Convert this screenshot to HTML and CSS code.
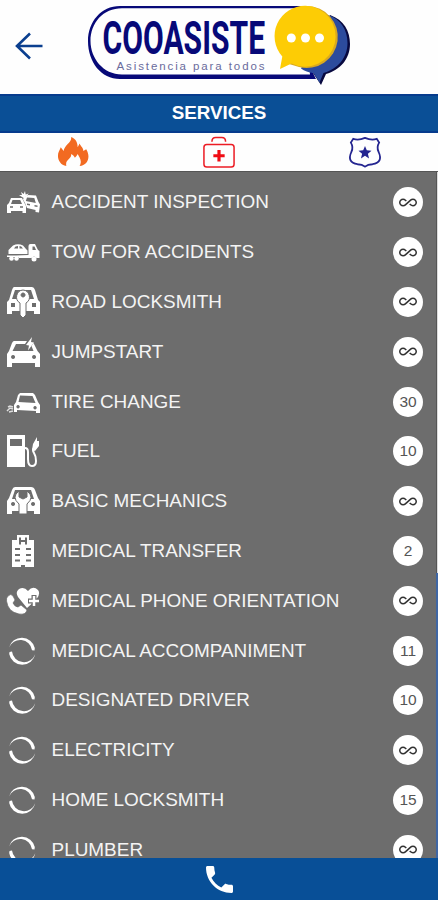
FILE: index.html
```html
<!DOCTYPE html>
<html lang="en">
<head>
    <meta charset="UTF-8">
    <meta name="viewport" content="width=device-width, initial-scale=1.0">
    <title>Cooasiste - Services</title>
    <link rel="stylesheet" href="styles.css">
</head>
<body>
    <!-- icon set -->
    <svg class="sprite" aria-hidden="true">
        <symbol id="crash" viewBox="0 0 34 34">
            <path fill-rule="evenodd" d="M5 13h11l3 6 1 2v7h-3.500v-2H5v2H1v-8l2-2zM6.500 15L5 19h11l-1.800-4zM4 21.200v1.500h3v-1.500zM14 21.200v1.500h3v-1.500z"/>
            <path fill-rule="evenodd" d="M18 12l4-2 8 .5 2.500 6.500 1.500 2.500-1 8-3.500-.5v-2L21 23l-2-5-2-3.500zM21 12.500l-1.200 3.500 10 2-1.500-5zM21 18.500V20l3 .6v-1.500zM28.500 20v1.500l3 .6v-1.500z"/>
            <path d="M16 12l-3-2 3 0-1-3 2.700 2L19 6l.7 3.500 3-1-2 2.500-3 2z"/>
        </symbol>
        <symbol id="tow" viewBox="0 0 34 34">
            <path fill-rule="evenodd" d="M2.500 19v-4L7 10.500Q12 8 17 10.500l3 3.500 1.500 1.500V19zM8 13.500h4V11l-2.500.5zM13.500 11v2.500H17l-1.800-2z"/>
            <path fill-rule="evenodd" d="M1 20.500h9L22.500 20V11q0-2 2-2H29l3 6 1.500 1v7h-3q-2.500-3-5 0H13l-1-1H1zM26.500 11.500V15h3.500l-1.500-3.500z"/>
            <circle cx="5.500" cy="23.500" r="2.300"/><circle cx="10.500" cy="23.500" r="2.300"/><circle cx="28" cy="24" r="2.500"/>
        </symbol>
        <symbol id="carkey" viewBox="0 0 34 34">
            <path fill-rule="evenodd" d="M8 2h18q2 0 3 3l3 10 2 2v12h-6v-3H6v3H1V17l2-2L6 5q1-3 2-3zM9 5L6 14h22L25 5zM5 18v4h4v-4zM26 18v4h4v-4z"/>
            <path fill-rule="evenodd" stroke="#6d6d6d" d="M17 5a7 7 0 0 1 3 13v12l-3 3-3-3V18a7 7 0 0 1 3-13zM17 8a2 2 0 1 0 .1 0z"/>
        </symbol>
        <symbol id="carbolt" viewBox="0 0 34 34">
            <path fill-rule="evenodd" d="M8 6h13l-2 3H10L6.500 16h21l-2-5 2-3 4 8 2.500 3v13h-5v-4H6v4H1V19l2-3 3-8q1-2 2-2zM7 20a2 2 0 1 0 .1 0zM28 20a2 2 0 1 0 .1 0z"/>
            <path d="M26 2l-6 8 3 .5-1 5 6-8-3-.5z"/>
        </symbol>
        <symbol id="cartire" viewBox="0 0 34 34">
            <path fill-rule="evenodd" d="M14 8h13l2 2 3 7 2 3v8h-4v-2L11 25v2H8v-7l2-3 2-7zM14 10.500L12.500 17l17 1L26.500 11zM12 20a1.700 1.700 0 1 0 .1 0zM29 21a1.700 1.700 0 1 0 .1 0z"/>
            <path fill="none" stroke="#ddd" stroke-width="1.500" d="M2 22l2-1 3 1M1 26l3-3 3 1M3 27l4-1"/>
        </symbol>
        <symbol id="pump" viewBox="0 0 34 34">
            <path fill-rule="evenodd" d="M1 1h18v32H1zM4 5v7h12V5z"/>
            <path fill="none" stroke="#fff" stroke-width="2" d="M19 14q3 0 3 4v7q0 7 4 7t4-5-2-8 0-5"/>
            <path d="M31 3v4h2v5l-4 5-3-1 1-6z"/>
        </symbol>
        <symbol id="carwrench" viewBox="0 0 34 34">
            <path fill-rule="evenodd" d="M9 3h16q3 0 4 3l3 8 2 3v13h-6v-3H6v3H1V17l2-3 3-8q1-3 3-3zM9 6L6 15h22L25 6zM7 18a2 2 0 1 0 .1 0zM27 18a2 2 0 1 0 .1 0z"/>
            <path stroke="#6d6d6d" d="M13 7v6l4 2 4-2V7q8 6 0 13v10h-8V20q-8-7 0-13z"/>
        </symbol>
        <symbol id="hospital" viewBox="0 0 34 34">
            <path d="M11 1h12v5h5v27h-9v-2h-4v2H6V6h5z"/>
            <path fill="none" stroke="#6d6d6d" stroke-width="2" d="M14 3.500v7M20 3.500v7M14 7h6M9 15h5M20 15h5M9 21h5M20 21h5M9 26.500h5M20 26.500h5"/>
        </symbol>
        <symbol id="heartphone" viewBox="0 0 34 34">
            <path d="M22 7q-4-5-9-2-4 3-1 8l9 11 9-8q5-6 2-10-5-5-10 1z"/>
            <path fill="none" stroke="#6d6d6d" stroke-width="5" d="M28 11v12M22 17h12"/>
            <path fill="none" stroke="#fff" stroke-width="2.500" d="M28 12v10M23 17h10"/>
            <path stroke="#6d6d6d" stroke-width=".7" d="M2 12q3-3 5 0l2 4-2 3q2 4 5 4l3-2 6 5q-1 5-8 4Q2 28 .500 17q-.5-3 1.500-5z"/>
        </symbol>
        <symbol id="loading" viewBox="0 0 34 34">
            <path d="M3 13.500A13.300 13.300 0 0 1 28.800 14l-.3 2.500-2.500-.3A12 12 0 0 0 3 13.500z"/>
            <path d="M29.300 20A13.300 13.300 0 0 1 3.200 20l.3-2 2.500-.5A12 12 0 0 0 29.300 20z"/>
        </symbol>
        <symbol id="infinite" viewBox="0 6 24 12">
            <path d="M18.600 6.620c-1.440 0-2.800.56-3.770 1.530L7.800 14.390c-.64.64-1.490.99-2.400.99-1.870 0-3.390-1.510-3.390-3.380S3.530 8.620 5.400 8.620c.91 0 1.760.35 2.440 1.030l1.130 1 1.510-1.340L9.220 8.200C8.200 7.180 6.840 6.620 5.400 6.620 2.420 6.620 0 9.040 0 12s2.420 5.380 5.400 5.380c1.440 0 2.800-.56 3.770-1.530l7.030-6.240c.64-.64 1.490-.99 2.400-.99 1.870 0 3.390 1.510 3.390 3.380s-1.520 3.380-3.390 3.380c-.9 0-1.760-.35-2.440-1.030l-1.140-1.010-1.510 1.340 1.270 1.120c1.020 1.010 2.370 1.570 3.820 1.570 2.980 0 5.400-2.410 5.400-5.380s-2.420-5.370-5.400-5.370z"/>
        </symbol>
    </svg>

    <div class="app">
        <header class="header">
            <svg class="back" viewBox="0 0 28 28">
                <path d="M27.500 14H2M15 1.500L2 14l13 12.500"/>
            </svg>
            <svg class="logo" viewBox="88 0 264 90">
                <path fill="#070978" fill-rule="evenodd" d="M304 6H120C101 6 88 22 88 41c0 21 13 38 32 38h196l-6-12zM304 8.300L310 74.500H122C103 74.500 90.500 58 90.500 41 90.500 23 103 8.300 122 8.300z"/>
                <path fill="#08093f" d="M330 15c14 5 20 16 20 29 0 15-10 26-24 30l-5 11-8-12z"/>
                <path fill="#2c4b9d" d="M328 15c13 4 19.500 15 19.500 28 0 15-10 26-24 30l-4 9.500-6-9.500c-5-.5-9-2-12.500-4.500z"/>
                <path fill="#d9a91f" d="M307 6a31 31 0 1 1-8 61l-10-3z"/>
                <path fill="#fdcc05" d="M305.500 5.700a30.500 30.500 0 1 1-14 57.800L280 69l2.300-12.500a30.500 30.500 0 0 1 23.200-50.800z"/>
                <g fill="#fff"><circle cx="291.300" cy="38" r="4.500"/><circle cx="305.500" cy="38" r="4.500"/><circle cx="319.500" cy="38" r="4.500"/></g>
                <text class="logo-name" transform="translate(102.500 53.500) scale(.64 1)" textLength="254">COOASISTE</text>
                <text class="logo-slogan" x="116.500" y="69.500" textLength="148">Asistencia para todos</text>
            </svg>
        </header>

        <h1 class="title">SERVICES</h1>

        <nav class="tabs">
            <svg class="tab" viewBox="0 0 34 34">
                <path fill="#f26a21" d="M10 32C4 31 1 26 1 21c0-4 2-6 3-9l3 4c1-7 9-9 8-15 5 2 7 6 7 11l2-4c1 3 4 4 4 8l3-2c5 8 2 17-7 18 3-6 0-9-2-13-1 2-2 3-3 4-1-2-2-3-4-4 1 6-7 6-5 13z"/>
            </svg>
            <svg class="tab" viewBox="0 0 34 34">
                <g fill="none" stroke="#ec1c24" stroke-width="1.600">
                    <rect x="1" y="9" width="32" height="24" rx="3"/>
                    <path d="M9.500 6q0-4.500 4-4.500h6.500q4 0 4 4.500"/>
                </g>
                <path fill="#f00c14" d="M15.300 15h3.400v4.300H23v3.400h-4.300V27h-3.400v-4.300H11v-3.400h4.300z"/>
            </svg>
            <svg class="tab" viewBox="0 0 34 34">
                <path fill="none" stroke="#242590" stroke-width="1.900" d="M4.500 3q5.500 2 12.500-1 7 3 12.500 1L32 7q-3 5-.5 10 5 11-6.500 13-5 0-8 2.500Q14 30 9 30-2.500 28 2.500 17 5 12 2 7z"/>
                <path fill="#242590" d="M17 10.500l1.900 4.700 5 .4-3.800 3.300 1.200 5-4.300-2.800-4.300 2.800 1.200-5-3.800-3.300 5-.4z"/>
            </svg>
        </nav>

        <main class="content">
            <ul class="services">
                <li class="service"><svg class="icon"><use href="#crash"/></svg><span class="name">ACCIDENT INSPECTION</span><span class="badge"><svg class="inf"><use href="#infinite"/></svg></span></li>
                <li class="service"><svg class="icon"><use href="#tow"/></svg><span class="name">TOW FOR ACCIDENTS</span><span class="badge"><svg class="inf"><use href="#infinite"/></svg></span></li>
                <li class="service"><svg class="icon"><use href="#carkey"/></svg><span class="name">ROAD LOCKSMITH</span><span class="badge"><svg class="inf"><use href="#infinite"/></svg></span></li>
                <li class="service"><svg class="icon"><use href="#carbolt"/></svg><span class="name">JUMPSTART</span><span class="badge"><svg class="inf"><use href="#infinite"/></svg></span></li>
                <li class="service"><svg class="icon"><use href="#cartire"/></svg><span class="name">TIRE CHANGE</span><span class="badge">30</span></li>
                <li class="service"><svg class="icon"><use href="#pump"/></svg><span class="name">FUEL</span><span class="badge">10</span></li>
                <li class="service"><svg class="icon"><use href="#carwrench"/></svg><span class="name">BASIC MECHANICS</span><span class="badge"><svg class="inf"><use href="#infinite"/></svg></span></li>
                <li class="service"><svg class="icon"><use href="#hospital"/></svg><span class="name">MEDICAL TRANSFER</span><span class="badge">2</span></li>
                <li class="service"><svg class="icon"><use href="#heartphone"/></svg><span class="name">MEDICAL PHONE ORIENTATION</span><span class="badge"><svg class="inf"><use href="#infinite"/></svg></span></li>
                <li class="service"><svg class="icon"><use href="#loading"/></svg><span class="name">MEDICAL ACCOMPANIMENT</span><span class="badge">11</span></li>
                <li class="service"><svg class="icon"><use href="#loading"/></svg><span class="name">DESIGNATED DRIVER</span><span class="badge">10</span></li>
                <li class="service"><svg class="icon"><use href="#loading"/></svg><span class="name">ELECTRICITY</span><span class="badge"><svg class="inf"><use href="#infinite"/></svg></span></li>
                <li class="service"><svg class="icon"><use href="#loading"/></svg><span class="name">HOME LOCKSMITH</span><span class="badge">15</span></li>
                <li class="service"><svg class="icon"><use href="#loading"/></svg><span class="name">PLUMBER</span><span class="badge"><svg class="inf"><use href="#infinite"/></svg></span></li>
            </ul>
            <div class="scroll"><div class="scroll-rest"></div></div>
        </main>

        <footer class="footer">
            <svg class="call" viewBox="3 3 18 18">
                <path d="M6.620 10.790c1.440 2.830 3.760 5.140 6.590 6.590l2.200-2.200c.27-.27.67-.36 1.020-.24 1.120.37 2.330.57 3.570.57.55 0 1 .45 1 1V20c0 .55-.45 1-1 1-9.390 0-17-7.610-17-17 0-.55.45-1 1-1h3.500c.55 0 1 .45 1 1 0 1.250.2 2.450.57 3.570.11.35.03.74-.25 1.020z"/>
            </svg>
        </footer>
    </div>
</body>
</html>
```
FILE: styles.css
```css
* {
    box-sizing: border-box;
}
body {
    margin: 0;
    background-color: #fefefe;
    font-family: "Liberation Sans", Arial, sans-serif;
}
.sprite {
    display: none;
}
.app {
    display: flex;
    flex-direction: column;
    height: 900px;
    overflow: hidden;
}
.header {
    display: flex;
    height: 94px;
    padding-left: 15px;
    gap: 45px;
}
.back {
    width: 28px;
    height: 28px;
    margin-top: 32px;
    fill: none;
    stroke: #0b3f8f;
    stroke-width: 2.6;
}
.logo {
    width: 264px;
    height: 90px;
    overflow: visible;
}
.logo-name {
    font-family: Roboto, sans-serif;
    font-weight: 700;
    font-size: 47px;
    fill: #070978;
}
.logo-slogan {
    font-size: 11.5px;
    fill: #6a6b9c;
}
.title {
    height: 39px;
    margin: 0;
    border-top: 2px solid #063b8d;
    border-bottom: 2px solid #063b8d;
    background-color: #0a4f96;
    color: #fff;
    font-size: 18.8px;
    line-height: 34px;
    text-align: center;
}
.tabs {
    display: flex;
    justify-content: space-around;
    height: 38px;
    padding-top: 3px;
}
.tab {
    width: 34px;
    height: 32px;
}
.content {
    display: flex;
    flex: 1;
    min-height: 0;
    border-top: 1px solid #555;
    background-color: #6d6d6d;
    overflow: hidden;
}
.services {
    flex: 1;
    margin: 0;
    padding: 5.5px 13px 0 6px;
    list-style: none;
}
.service {
    display: flex;
    align-items: center;
    height: 49.8px;
}
.icon {
    width: 34px;
    height: 34px;
    margin-right: 11.5px;
    fill: #fff;
}
.name {
    flex: 1;
    color: #f4f4f4;
    font-size: 18.95px;
    white-space: nowrap;
}
.badge {
    display: flex;
    align-items: center;
    justify-content: center;
    width: 30px;
    height: 30px;
    border-radius: 50%;
    background-color: #fff;
    color: #555;
    font-size: 15.5px;
}
.inf {
    width: 18px;
    height: 9px;
    fill: #333;
}
.scroll {
    width: 2px;
    border-left: 1px solid #555;
    background-color: #dcdcdc;
}
.scroll-rest {
    height: 286px;
    margin: 401px 0 0 -1px;
    background-color: #3f66a3;
}
.footer {
    display: flex;
    justify-content: center;
    height: 42px;
    padding-top: 8px;
    background-color: #084f97;
}
.call {
    width: 27px;
    height: 27px;
    fill: #fff;
}
```
